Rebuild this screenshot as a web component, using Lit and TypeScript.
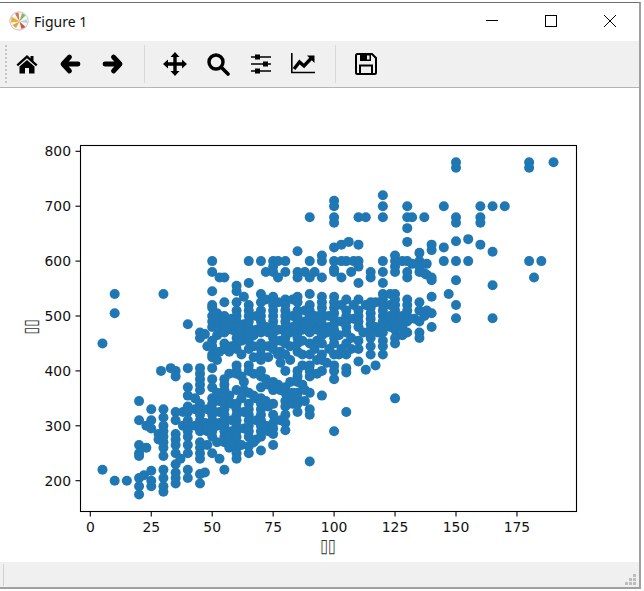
import { LitElement, html, css, svg } from "lit";
import { customElement } from "lit/decorators.js";

// scatter data, one entry per x value
const COLUMNS: [number, number[]][] = [
  [5, [450, 220]],
  [10, [540, 505, 200]],
  [15, [200]],
  [20, [345, 310, 265, 250, 245, 205, 190, 175]],
  [22, [210]],
  [23, [300, 260]],
  [25, [330, 310, 295, 218, 200, 190]],
  [28, [285, 275]],
  [29, [400]],
  [30, [540, 330, 315, 300, 290, 280, 270, 260, 245, 220, 205, 190, 180]],
  [33, [405]],
  [35, [400, 390, 325, 310, 285, 275, 265, 250, 230, 215, 205, 195]],
  [37, [240]],
  [38, [325, 300]],
  [40, [485, 405, 370, 355, 335, 325, 310, 300, 290, 280, 265, 250, 220, 205]],
  [43, [350, 330, 300]],
  [45, [470, 460, 405, 395, 385, 375, 365, 340, 330, 320, 310, 300, 290, 270, 260, 250, 240, 212, 195]],
  [47, [467, 305, 215]],
  [48, [445, 330, 290, 265]],
  [50, [600, 580, 545, 520, 515, 500, 490, 480, 455, 445, 430, 425, 405, 385, 370, 350, 340, 330, 320, 310, 300, 290, 280, 250]],
  [52, [505, 465, 420, 360, 300, 270]],
  [53, [570, 495, 485, 470, 435, 345, 325, 305, 240]],
  [55, [570, 525, 500, 490, 480, 470, 450, 440, 385, 375, 365, 350, 340, 330, 320, 310, 300, 290, 280, 270, 220]],
  [57, [480, 435, 395, 355, 275, 260]],
  [58, [495, 475, 445, 340, 310, 290]],
  [60, [555, 545, 525, 510, 500, 490, 480, 470, 460, 450, 440, 410, 400, 395, 365, 340, 330, 320, 310, 300, 290, 280, 270, 260, 250, 240]],
  [62, [475, 455, 430, 390, 350, 265]],
  [63, [535, 485, 465, 380, 365, 325, 295]],
  [65, [600, 560, 520, 510, 500, 490, 480, 470, 455, 440, 410, 400, 360, 340, 330, 320, 310, 300, 290, 280, 263, 250]],
  [67, [465, 445, 425, 395, 355, 270]],
  [68, [500, 475, 350, 310, 275]],
  [70, [600, 540, 525, 510, 500, 490, 480, 470, 450, 440, 430, 420, 400, 390, 370, 350, 340, 330, 320, 310, 300, 290, 280, 255]],
  [72, [580, 530, 480, 385, 345, 300]],
  [73, [470, 445, 425, 375, 335, 290]],
  [75, [600, 590, 580, 535, 520, 510, 500, 490, 480, 470, 460, 450, 440, 380, 365, 340, 320, 305, 295, 285, 265]],
  [77, [600, 570, 525, 475, 430, 375]],
  [78, [455, 435, 415, 365, 310]],
  [80, [600, 580, 530, 520, 510, 500, 490, 480, 470, 460, 450, 430, 400, 370, 360, 345, 335, 320, 305, 292]],
  [82, [470, 445, 420, 380, 350]],
  [83, [530, 500, 480, 360, 340]],
  [85, [618, 580, 570, 535, 525, 510, 500, 490, 480, 470, 460, 450, 435, 400, 390, 380, 360, 350, 340, 325]],
  [87, [475, 455, 430, 410, 375]],
  [88, [580, 510, 490, 365, 345]],
  [90, [680, 600, 570, 540, 520, 510, 500, 490, 480, 470, 450, 430, 410, 400, 390, 360, 330, 320, 235]],
  [92, [580, 500, 485, 440]],
  [93, [475, 455, 420, 395]],
  [95, [610, 600, 570, 535, 525, 515, 505, 495, 485, 475, 465, 450, 430, 420, 400, 355]],
  [97, [470, 415]],
  [98, [500, 480, 440]],
  [100, [710, 700, 680, 670, 625, 600, 585, 580, 535, 525, 515, 505, 495, 485, 475, 460, 450, 430, 410, 400, 385, 290]],
  [102, [465, 430]],
  [103, [630, 600, 570, 520, 490, 440]],
  [105, [600, 530, 510, 500, 490, 480, 470, 450, 430, 405, 397, 325]],
  [106, [635]],
  [107, [580, 460, 440]],
  [108, [600, 520, 495]],
  [110, [680, 630, 600, 590, 560, 530, 510, 500, 490, 480, 455, 440, 417]],
  [112, [470]],
  [113, [680, 520, 402]],
  [115, [580, 570, 525, 515, 505, 495, 485, 475, 460, 445, 430]],
  [117, [525, 480, 410]],
  [118, [470]],
  [120, [720, 700, 680, 600, 580, 560, 540, 530, 520, 510, 500, 490, 480, 470, 455, 445, 430]],
  [122, [490]],
  [123, [540, 520, 500, 480]],
  [125, [610, 600, 590, 580, 540, 530, 520, 510, 500, 490, 475, 460, 450, 350]],
  [127, [490]],
  [128, [600, 500, 480, 465]],
  [130, [700, 680, 660, 635, 600, 580, 570, 530, 520, 510, 500, 490, 470]],
  [132, [680, 595]],
  [133, [495]],
  [135, [615, 600, 590, 580, 525, 510, 490, 470, 460]],
  [137, [680, 578, 500]],
  [138, [595, 575, 510]],
  [140, [630, 620, 570, 565, 535, 505, 480]],
  [145, [700, 625, 600]],
  [147, [540]],
  [150, [780, 770, 680, 670, 636, 600, 565, 520, 496]],
  [155, [640, 600]],
  [160, [700, 680, 670, 630]],
  [165, [700, 617, 556, 496]],
  [170, [700]],
  [180, [780, 770, 600]],
  [182, [570]],
  [185, [600]],
  [190, [780]],
];

const px = (x: number) => 90.3 + 2.438 * x;
const py = (y: number) => 151.3 + (800 - y) * 0.549;

const AX = { left: 80.5, right: 576.5, top: 145.5, bottom: 511.5 };
const XTICKS = [0, 25, 50, 75, 100, 125, 150, 175];
const YTICKS = [200, 300, 400, 500, 600, 700, 800];

@customElement("app-root")
export class AppRoot extends LitElement {
  static styles = css`
    :host {
      display: block;
      width: 644px;
      height: 591px;
      background: #fff;
      overflow: hidden;
      font-family: "Noto Sans", "Open Sans", sans-serif;
    }
    .window {
      width: 641px;
      height: 587px;
      margin-top: 2px;
      box-sizing: border-box;
      border-top: 1px solid #6e6e6e;
      border-right: 2px solid #a0a0a0;
      border-bottom: 2px solid #a0a0a0;
      display: flex;
      flex-direction: column;
      background: #fff;
    }
    .titlebar {
      height: 38px;
      flex: none;
      box-sizing: border-box;
      padding: 0 0 2px 9px;
      display: flex;
      align-items: center;
    }
    .titlebar .logo { width: 20px; height: 20px; flex: none; margin-right: 5px; }
    .title { font-size: 14px; color: #111; flex: 1; }
    .winctl {
      width: 59px;
      padding-bottom: 1px;
      display: flex;
      justify-content: center;
      flex: none;
    }
    .winctl svg { width: 14px; height: 14px; display: block; }
    .toolbar {
      height: 47px;
      flex: none;
      box-sizing: border-box;
      background: #f0f0f0;
      border-bottom: 1px solid #b4b4b4;
      display: flex;
      align-items: center;
      padding-left: 5px;
    }
    .grip {
      width: 0;
      height: 38px;
      border-left: 2px dotted #c4c4c4;
      margin-right: -1px;
      flex: none;
    }
    .tool {
      width: 42.7px;
      flex: none;
      display: flex;
      justify-content: center;
    }
    .tool svg { width: 24px; height: 24px; display: block; }
    .sep {
      width: 1px;
      height: 38px;
      background: #d8d8d8;
      margin: 0 9px 0 10px;
      flex: none;
    }
    .canvas { flex: 1; min-height: 0; }
    .canvas svg { display: block; width: 639px; height: 475px; }
    .tick {
      font-family: "DejaVu Sans", sans-serif;
      font-size: 13.9px;
      fill: #111;
    }
    .axlabel {
      font-family: "DejaVu Sans", sans-serif;
      font-size: 14px;
      fill: #333;
    }
    .status {
      height: 25px;
      flex: none;
      background: #f0f0f0;
      display: flex;
      align-items: center;
      justify-content: space-between;
      padding: 0 2px 0 3px;
    }
    .status .panel {
      width: 1px;
      height: 22px;
      background: #d0d0d0;
    }
    .status svg { width: 14px; height: 14px; align-self: flex-end; }
  `;

  private plot() {
    return svg`
      <svg viewBox="0 88 639 475">
        ${COLUMNS.map(([x, ys]) =>
          ys.map((y) => svg`<circle cx=${px(x)} cy=${py(y)} r="5" fill="#1f77b4"></circle>`)
        )}
        <rect x=${AX.left} y=${AX.top} width=${AX.right - AX.left} height=${AX.bottom - AX.top}
          fill="none" stroke="#000" stroke-width="1.1"></rect>
        ${XTICKS.map(
          (t) => svg`
            <line x1=${px(t)} x2=${px(t)} y1=${AX.bottom} y2=${AX.bottom + 5} stroke="#000" stroke-width="1.1"></line>
            <text class="tick" x=${px(t)} y="532" text-anchor="middle">${t}</text>`
        )}
        ${YTICKS.map(
          (t) => svg`
            <line x1=${AX.left - 5} x2=${AX.left} y1=${py(t)} y2=${py(t)} stroke="#000" stroke-width="1.1"></line>
            <text class="tick" x="71" y=${py(t) + 5} text-anchor="end">${t}</text>`
        )}
        <text class="axlabel" transform="translate(328 552) rotate(0.2) scale(1 1.35)" text-anchor="middle">▯▯</text>
        <text class="axlabel" transform="translate(37 327) rotate(-90) scale(1 1.35)" text-anchor="middle">▯▯</text>
      </svg>`;
  }

  render() {
    return html`
      <div class="window">
        <div class="titlebar">
          <svg class="logo" viewBox="0 0 20 20">
            <circle cx="10" cy="10" r="9.2" fill="#f6f6f6" stroke="#c4c4c4" stroke-width="1"></circle>
            <path d="M10.5 10.5 2.5 5.5 2 11.5Z" fill="#e6b032"></path>
            <path d="M10.5 10.5 3.5 14 7 17Z" fill="#e2a23a"></path>
            <path d="M10.5 10.5 6 2.5 9.5 1.5Z" fill="#dc6a48"></path>
            <path d="M10.5 10.5 13 2 16.5 4.5Z" fill="#86b854"></path>
            <path d="M10.5 10.5 16.5 16 12.5 18Z" fill="#d5503a"></path>
            <path d="M10.5 10.5 18 8.5 18 12Z" fill="#b4d4e6"></path>
          </svg>
          <span class="title">Figure 1</span>
          <div class="winctl">
            <svg viewBox="0 0 14 14"><path d="M1 6.5H13" stroke="#000" stroke-width="1"></path></svg>
          </div>
          <div class="winctl">
            <svg viewBox="0 0 14 14"><rect x="1.5" y="1.5" width="11" height="11" fill="none" stroke="#000"></rect></svg>
          </div>
          <div class="winctl">
            <svg viewBox="0 0 14 14"><path d="M1 1 13 13M13 1 1 13" stroke="#000" stroke-width="1"></path></svg>
          </div>
        </div>
        <div class="toolbar">
          <div class="grip"></div>
          <div class="tool">
            <svg viewBox="0 0 24 24"><path d="M12 3 1.5 12.5 3 14.2 12 6.2 21 14.2 22.5 12.5 18.5 8.9V4H15.5V6.2Z" fill="#000"></path><path d="M12 8 4.5 14.6V21.5H10V16H14V21.5H19.5V14.6Z" fill="#000"></path></svg>
          </div>
          <div class="tool">
            <svg viewBox="0 0 24 24"><path d="M11.5 5 5 12 11.5 19M6 12H20" fill="none" stroke="#000" stroke-width="4.8" stroke-linecap="round" stroke-linejoin="round"></path></svg>
          </div>
          <div class="tool">
            <svg viewBox="0 0 24 24"><path d="M12.5 5 19 12 12.5 19M18 12H4" fill="none" stroke="#000" stroke-width="4.8" stroke-linecap="round" stroke-linejoin="round"></path></svg>
          </div>
          <div class="sep"></div>
          <div class="tool">
            <svg viewBox="0 0 24 24"><path d="M12 0 16.5 5H13.7V10.3H19V7.5L24 12 19 16.5V13.7H13.7V19H16.5L12 24 7.5 19H10.3V13.7H5V16.5L0 12 5 7.5V10.3H10.3V5H7.5Z" fill="#000"></path></svg>
          </div>
          <div class="tool">
            <svg viewBox="0 0 24 24"><circle cx="10" cy="10" r="7" fill="none" stroke="#000" stroke-width="3.4"></circle><path d="M15.5 15.5 22 22" stroke="#000" stroke-width="3.6" stroke-linecap="round"></path></svg>
          </div>
          <div class="tool">
            <svg viewBox="0 0 24 24"><path d="M2 5H22M2 12H22M2 19H22" stroke="#000" stroke-width="1.6"></path><rect x="6" y="2.5" width="5" height="5" fill="#000"></rect><rect x="14" y="9.5" width="5" height="5" fill="#000"></rect><rect x="6" y="16.5" width="5" height="5" fill="#000"></rect></svg>
          </div>
          <div class="tool">
            <svg viewBox="0 0 24 24"><path d="M.8 1V20.5H24" fill="none" stroke="#000" stroke-width="1.6"></path><path d="M3 17 8.5 10 13 14 20 6.5" fill="none" stroke="#000" stroke-width="3.4"></path><path d="M16 3.5H23.5V11Z" fill="#000"></path></svg>
          </div>
          <div class="sep"></div>
          <div class="tool">
            <svg viewBox="0 0 24 24"><path d="M3.5 2H18L22 6V20.5A1.5 1.5 0 0 1 20.5 22H3.5A1.5 1.5 0 0 1 2 20.5V3.5A1.5 1.5 0 0 1 3.5 2Z" fill="none" stroke="#000" stroke-width="2"></path><path d="M6 2H17V9H6Z" fill="#000"></path><rect x="13" y="3.5" width="2.5" height="4" fill="#f0f0f0"></rect><path d="M6 21V13.5H18V21" fill="none" stroke="#000" stroke-width="2"></path></svg>
          </div>
        </div>
        <div class="canvas">${this.plot()}</div>
        <div class="status">
          <div class="panel"></div>
          <svg viewBox="0 0 14 14" fill="#bdbdbd">
            <rect x="10" y="1" width="3" height="3"></rect>
            <rect x="6" y="5" width="3" height="3"></rect><rect x="10" y="5" width="3" height="3"></rect>
            <rect x="2" y="9" width="3" height="3"></rect><rect x="6" y="9" width="3" height="3"></rect><rect x="10" y="9" width="3" height="3"></rect>
          </svg>
        </div>
      </div>
    `;
  }
}
